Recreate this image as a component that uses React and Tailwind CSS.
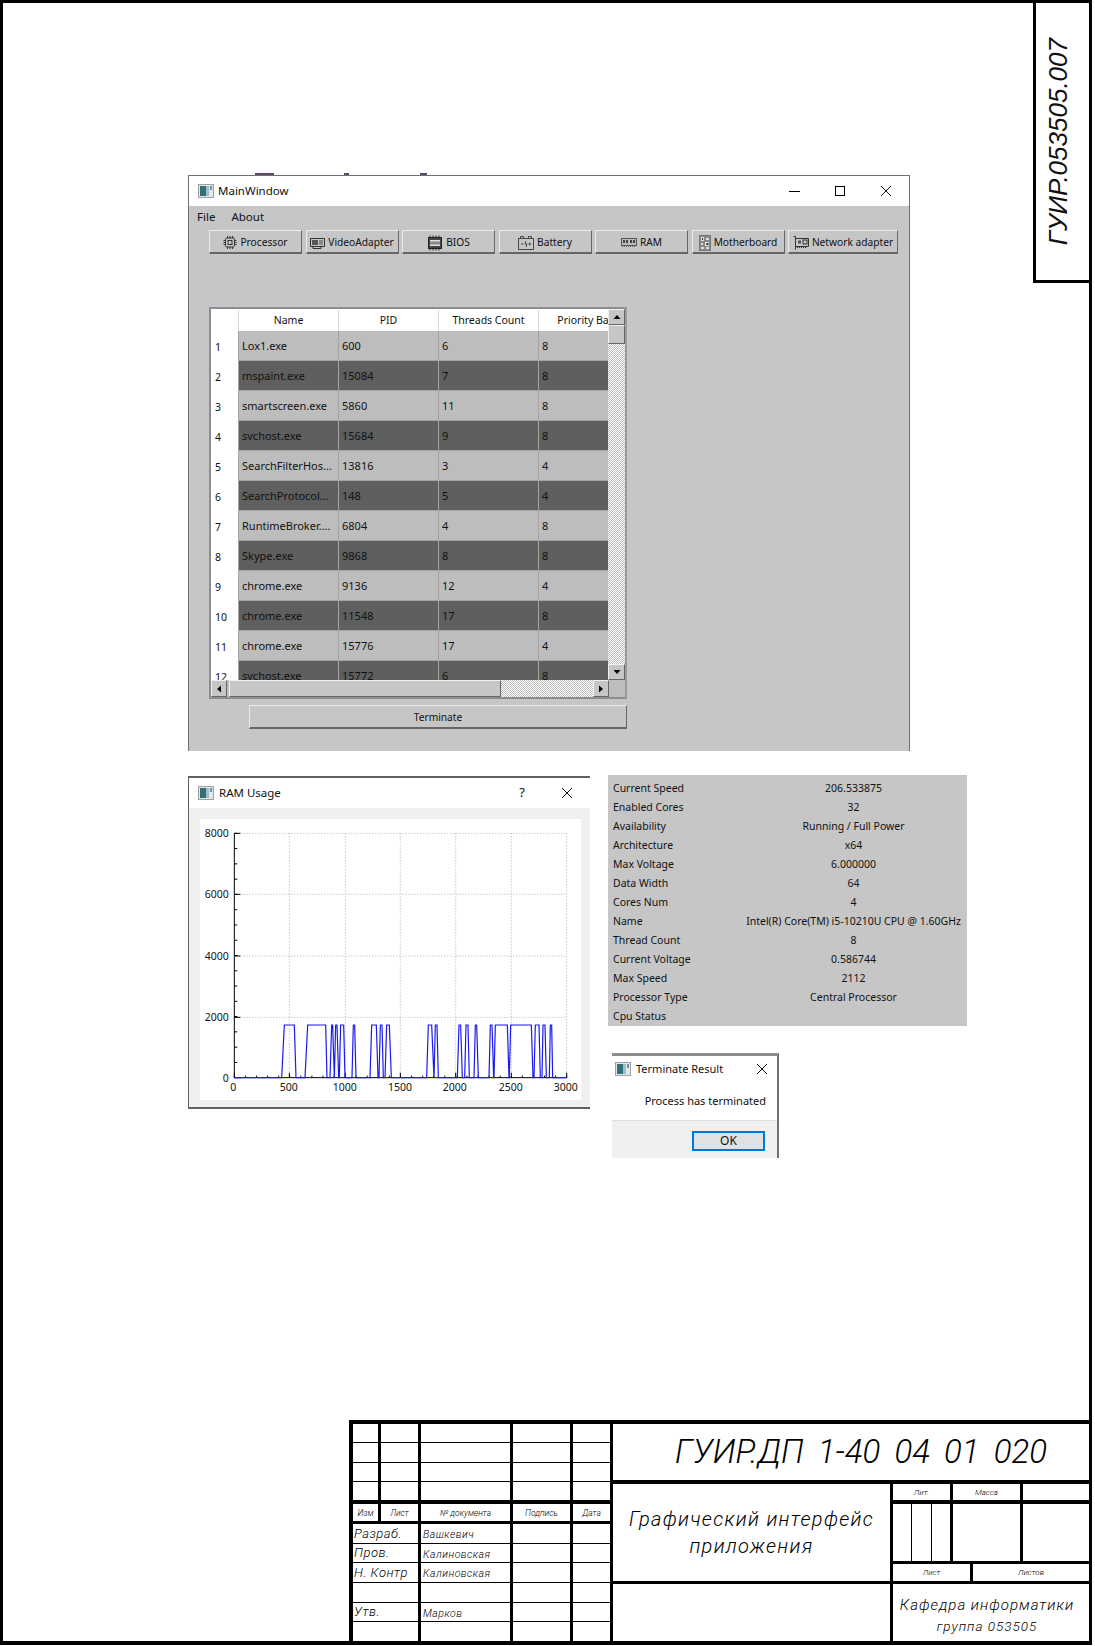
import React from 'react';

const processes = [
  ['Lox1.exe', '600', '6', '8'],
  ['mspaint.exe', '15084', '7', '8'],
  ['smartscreen.exe', '5860', '11', '8'],
  ['svchost.exe', '15684', '9', '8'],
  ['SearchFilterHos...', '13816', '3', '4'],
  ['SearchProtocol...', '148', '5', '4'],
  ['RuntimeBroker....', '6804', '4', '8'],
  ['Skype.exe', '9868', '8', '8'],
  ['chrome.exe', '9136', '12', '4'],
  ['chrome.exe', '11548', '17', '8'],
  ['chrome.exe', '15776', '17', '4'],
  ['svchost.exe', '15772', '6', '8'],
];

const specs = [
  ['Current Speed', '206.533875'],
  ['Enabled Cores', '32'],
  ['Availability', 'Running / Full Power'],
  ['Architecture', 'x64'],
  ['Max Voltage', '6.000000'],
  ['Data Width', '64'],
  ['Cores Num', '4'],
  ['Name', 'Intel(R) Core(TM) i5-10210U CPU @ 1.60GHz'],
  ['Thread Count', '8'],
  ['Current Voltage', '0.586744'],
  ['Max Speed', '2112'],
  ['Processor Type', 'Central Processor'],
  ['Cpu Status', ''],
];

// rise start, top start, top end, fall end - measured on the 3x crop
const bursts = [
  [305, 313, 343, 348], [375, 383, 437, 441], [450, 455, 458, 463], [463, 467, 471, 476],
  [478, 482, 491, 495], [516, 520, 524, 528], [570, 575, 589, 594], [597, 601, 606, 610],
  [615, 620, 628, 634], [740, 745, 755, 762], [762, 766, 771, 775], [832, 837, 842, 847],
  [854, 858, 864, 868], [882, 886, 890, 895], [927, 931, 936, 941], [942, 946, 982, 987],
  [988, 992, 1054, 1059], [1062, 1066, 1077, 1081], [1086, 1089, 1095, 1099], [1108, 1111, 1115, 1118],
];

const px = (z) => z / 3 - 20;
const py = (z) => z / 3 - 48;

function WindowIcon() {
  return (
    <svg width="16" height="14" viewBox="0 0 16 14" className="shrink-0">
      <rect x="0.5" y="0.5" width="15" height="13" fill="#e6e6e6" stroke="#a0a0a0" />
      <rect x="2" y="2" width="6" height="10" fill="#2f6f78" />
      <rect x="8" y="2" width="3" height="10" fill="#9fc0c8" />
      <rect x="12" y="2" width="2" height="4" fill="#6d8fc0" />
    </svg>
  );
}

function CloseIcon() {
  return (
    <svg width="12" height="12" viewBox="0 0 12 12">
      <path d="M1 1l10 10M11 1L1 11" stroke="#111" strokeWidth="1" fill="none" />
    </svg>
  );
}

function CpuIcon() {
  return (
    <svg width="14" height="15" viewBox="0 0 14 15" fill="none" stroke="#333">
      <rect x="2.5" y="3" width="9" height="9" rx="1.5" />
      <rect x="5" y="5.5" width="4" height="4" />
      <path d="M4.5 1v2M7 1v2M9.500 1v2M4.500 12v2M7 12v2M9.500 12v2M0.500 5.500h2M0.500 7.500h2M0.500 9.500h2M11.500 5.500h2M11.500 7.500h2M11.500 9.500h2" />
    </svg>
  );
}

function VideoIcon() {
  return (
    <svg width="15" height="12" viewBox="0 0 15 12" fill="none" stroke="#333">
      <path d="M0.500 1.500h14v8h-14z" />
      <rect x="2" y="3" width="6" height="5" fill="#555" stroke="none" />
      <rect x="9" y="3" width="4" height="5" fill="#888" stroke="none" />
      <path d="M3 10v1.500h8v-1.500" />
    </svg>
  );
}

function BiosIcon() {
  return (
    <svg width="16" height="16" viewBox="0 0 16 16" fill="none" stroke="#222">
      <rect x="1.500" y="2.500" width="13" height="11" fill="#444" />
      <rect x="3" y="5" width="10" height="6" fill="#ddd" stroke="none" />
      <path d="M4 6.500v3M6 6.500v3M8 6.500v3M10 6.500v3M12 6.500v3" stroke="#333" />
      <path d="M3 0.500v2M6 0.500v2M9 0.500v2M12 0.500v2M3 13.500v2M6 13.500v2M9 13.500v2M12 13.500v2" />
    </svg>
  );
}

function BatteryIcon() {
  return (
    <svg width="16" height="15" viewBox="0 0 16 15" fill="none" stroke="#444">
      <path d="M0.500 3.500h15v11h-15z" />
      <path d="M2.500 3.500v-2h3v2M10.500 3.500v-2h3v2M3 9h2.500M10.500 9h2.500M11.700 7.700v2.600" />
      <path d="M8 6l-1 3h2l-1 3" />
    </svg>
  );
}

function RamIcon() {
  return (
    <svg width="16" height="9" viewBox="0 0 16 9" fill="none">
      <rect x="0.500" y="0.500" width="15" height="7" fill="#bbb" stroke="#555" />
      <path d="M2 2h2v3H2zM5 2h2v3H5zM9 2h2v3H9zM12 2h2v3h-2z" fill="#444" />
      <path d="M1 8.500h14" stroke="#666" strokeDasharray="1 1" />
    </svg>
  );
}

function BoardIcon() {
  return (
    <svg width="12" height="16" viewBox="0 0 12 16" fill="none">
      <rect x="0.500" y="0.500" width="11" height="15" fill="#888" stroke="#777" />
      <path d="M2 2h3v4H2zM7 3h3v2H7zM2 8h2v2H2zM6 7h4v4H6zM2 12h3v2H2zM7 12h3v2H7z" fill="#ddd" />
      <path d="M3 3h1v2H3zM7.500 8h2v2h-2z" fill="#333" />
    </svg>
  );
}

function NetworkIcon() {
  return (
    <svg width="16" height="15" viewBox="0 0 16 15" fill="none" stroke="#333">
      <path d="M0.500 1.500h2v13M2.500 3.500h13v8h-13" />
      <rect x="5" y="5.500" width="3" height="3" fill="#555" stroke="none" />
      <rect x="10" y="5" width="4" height="4" />
      <path d="M4 12.500h9" strokeDasharray="1 1" />
    </svg>
  );
}

function QtButton({ icon, label, className }) {
  return (
    <button className={`flex items-center justify-center gap-[3px] h-[24px] pt-[2px] shrink-0 whitespace-nowrap bg-[#c6c6c6] border border-t-[#ececec] border-l-[#ececec] border-r-[#666] border-b-2 border-b-[#666] text-[10.200px] text-[#111] ${className}`}>
      {icon}
      <span>{label}</span>
    </button>
  );
}

function ArrowButton({ d, className }) {
  return (
    <div className={`flex items-center justify-center bg-[#c6c6c6] border border-t-[#f0f0f0] border-l-[#f0f0f0] border-r-[#666] border-b-[#666] ${className}`}>
      <svg width="8" height="8" viewBox="0 0 8 8"><path d={d} fill="#000" /></svg>
    </div>
  );
}

const track = 'bg-[repeating-conic-gradient(#bdbdbd_0_25%,#fff_0_50%)] bg-[length:2px_2px]';

function ProcessTable() {
  return (
    <div className="relative ml-[20px] mt-[53px] w-[418px] h-[392px] flex flex-col bg-white border-2 border-[#8c8c94] border-r-[#9a9aa0]">
      <div className="flex flex-1 min-h-0">
        <div className="w-[399px] overflow-hidden">
          <div className="flex h-[22px] w-[430px] pt-px bg-white text-[10.500px] text-[#111]">
            <div className="w-[27px] shrink-0" />
            {['Name', 'PID', 'Threads Count', 'Priority Base'].map((h) => (
              <div key={h} className="w-[100px] shrink-0 border-l border-[#d8d8d8] flex items-center justify-center whitespace-nowrap">{h}</div>
            ))}
          </div>
          {processes.map((row, i) => (
            <div key={i} className="flex h-[30px] w-[430px] text-[11px] text-[#111]">
              <div className="w-[27px] shrink-0 bg-white pl-[4px] flex items-center pt-[3px] text-[10.500px]">{i + 1}</div>
              <div className={`flex flex-1 border-b border-[#a4a4a4] ${i % 2 ? 'bg-[#5f5f5f]' : 'bg-[#bdbdbd]'}`}>
                {row.map((c, j) => (
                  <div key={j} className="w-[100px] shrink-0 pl-[3px] pt-[2px] flex items-center border-l border-[#a4a4a4] whitespace-nowrap overflow-hidden">{c}</div>
                ))}
              </div>
            </div>
          ))}
        </div>
        <div className="w-[17px] flex flex-col">
          <ArrowButton d="M4 2l3.500 4H0.500z" className="h-[16px]" />
          <div className="h-[19px] bg-[#c6c6c6] border border-t-[#f0f0f0] border-l-[#f0f0f0] border-r-[#666] border-b-[#666]" />
          <div className={`flex-1 ${track}`} />
          <ArrowButton d="M4 6L0.500 2h7z" className="h-[16px]" />
        </div>
      </div>
      <div className="flex h-[17px] shrink-0 bg-[#bdbdbd]">
        <ArrowButton d="M2 4l4-3.500v7z" className="w-[16px]" />
        <div className="w-[272px] ml-[2px] bg-[#c6c6c6] border border-t-[#f0f0f0] border-l-[#f0f0f0] border-r-[#666] border-b-[#666]" />
        <div className={`w-[92px] ${track}`} />
        <ArrowButton d="M6 4L2 0.500v7z" className="w-[16px]" />
      </div>
    </div>
  );
}

function MainWindow() {
  return (
    <div className="absolute left-[188px] top-[175px] w-[722px] h-[576px] bg-[#c6c6c6] border border-b-0 border-[#707070]">
      <div className="flex items-center h-[30px] bg-white pl-[9px] text-[11.500px] text-[#111]">
        <WindowIcon />
        <span className="ml-[4px]">MainWindow</span>
        <div className="ml-auto flex items-center">
          <div className="w-[45px] flex justify-center"><div className="w-[11px] h-px bg-black" /></div>
          <div className="w-[46px] flex justify-center"><div className="w-[10px] h-[10px] border border-black" /></div>
          <div className="w-[46px] flex justify-center"><CloseIcon /></div>
        </div>
      </div>
      <div className="flex gap-[16px] h-[24px] pb-[2px] items-center pl-[8px] text-[11.500px] text-[#111]">
        <span>File</span>
        <span>About</span>
      </div>
      <div className="flex gap-[3.500px] pl-[20px]">
        <QtButton icon={<CpuIcon />} label="Processor" className="w-[93px]" />
        <QtButton icon={<VideoIcon />} label="VideoAdapter" className="w-[93px]" />
        <QtButton icon={<BiosIcon />} label="BIOS" className="w-[93px]" />
        <QtButton icon={<BatteryIcon />} label="Battery" className="w-[93px]" />
        <QtButton icon={<RamIcon />} label="RAM" className="w-[93px]" />
        <QtButton icon={<BoardIcon />} label="Motherboard" className="w-[93px]" />
        <QtButton icon={<NetworkIcon />} label="Network adapter" className="w-[110px]" />
      </div>
      <ProcessTable />
      <QtButton label="Terminate" className="ml-[60px] mt-[6px] w-[378px]" />
    </div>
  );
}

function RamChart() {
  const xs = [163, 328, 496, 661, 827, 994, 1160];
  const ys = [187, 370, 555, 739, 920];
  const xLabels = [[160, '0'], [326, '500'], [494, '1000'], [660, '1500'], [824, '2000'], [992, '2500'], [1157, '3000']];
  const yLabels = [[187, '8000'], [370, '6000'], [555, '4000'], [739, '2000'], [922, '0']];
  const points = [`${px(163)},${py(920)}`];
  bursts.forEach(([a, b, c, d]) => {
    points.push(`${px(a)},${py(920)}`, `${px(b)},${py(762)}`, `${px(c)},${py(762)}`, `${px(d)},${py(920)}`);
  });
  points.push(`${px(1160)},${py(920)}`);
  const minorY = [];
  for (let i = 0; i < 16; i++) minorY.push(187 + (i * (920 - 187)) / 16);
  const minorX = [];
  for (let i = 0; i <= 30; i++) minorX.push(163 + (i * 997) / 30);

  return (
    <svg width="381" height="281" viewBox="0 0 381 281" className="block" fontFamily="'Noto Sans', sans-serif" fontSize="10.500" fill="#111">
      {xs.slice(1).map((x) => (
        <line key={x} x1={px(x)} x2={px(x)} y1={py(187)} y2={py(920)} stroke="#b0b0b0" strokeDasharray="1 2" />
      ))}
      {ys.slice(0, -1).map((y) => (
        <line key={y} x1={px(163)} x2={px(1160)} y1={py(y)} y2={py(y)} stroke="#b0b0b0" strokeDasharray="1 2" />
      ))}
      <path d={`M${px(163)} ${py(187)}V${py(920)}H${px(1160)}`} fill="none" stroke="#000" />
      {minorY.map((y) => <line key={y} x1={px(163)} x2={px(163) + 3} y1={py(y)} y2={py(y)} stroke="#000" />)}
      {ys.map((y) => <line key={y} x1={px(163)} x2={px(163) + 6} y1={py(y)} y2={py(y)} stroke="#000" />)}
      {minorX.map((x) => <line key={x} x1={px(x)} x2={px(x)} y1={py(920)} y2={py(920) - 2} stroke="#000" />)}
      {xs.map((x) => <line key={x} x1={px(x)} x2={px(x)} y1={py(920)} y2={py(920) - 5} stroke="#000" />)}
      <polyline points={points.join(' ')} fill="none" stroke="#1a1af0" strokeWidth="1.200" />
      {yLabels.map(([y, t]) => <text key={t} x={px(146)} y={py(y) + 4} textAnchor="end">{t}</text>)}
      {xLabels.map(([x, t]) => <text key={t} x={px(x)} y={py(950) + 3} textAnchor="middle">{t}</text>)}
    </svg>
  );
}

function RamWindow() {
  return (
    <div className="absolute left-[188px] top-[776px] w-[402px] h-[333px] bg-[#f0f0f0] border-l border-t-2 border-b-2 border-[#606060]">
      <div className="flex items-center h-[30px] bg-white pl-[9px] text-[11.500px] text-[#111]">
        <WindowIcon />
        <span className="ml-[5px]">RAM Usage</span>
        <span className="ml-auto mr-[19px] text-[13px]">?</span>
        <div className="w-[46px] flex justify-center"><CloseIcon /></div>
      </div>
      <div className="ml-[11px] mt-[11px] w-[381px] h-[281px] bg-white">
        <RamChart />
      </div>
    </div>
  );
}

function SpecPanel() {
  return (
    <div className="absolute left-[608px] top-[775px] w-[359px] h-[251px] bg-[#c6c6c6] pt-[4px] text-[10.500px] text-[#111]">
      {specs.map(([k, v]) => (
        <div key={k} className="grid grid-cols-[132px_1fr] h-[19px] items-center">
          <div className="pl-[5px]">{k}</div>
          <div className="text-center whitespace-nowrap">{v}</div>
        </div>
      ))}
    </div>
  );
}

function TerminateDialog() {
  return (
    <div className="absolute left-[612px] top-[1053px] w-[167px] h-[105px] flex flex-col bg-white border-r-2 border-[#707070] border-t-[3px] border-t-[#8c8c8c] text-[#111]">
      <div className="flex items-center h-[26px] pl-[3px] text-[11px]">
        <WindowIcon />
        <span className="ml-[5px]">Terminate Result</span>
        <div className="ml-auto pr-[9px]"><CloseIcon /></div>
      </div>
      <div className="h-[38px] flex items-center justify-end pr-[11px] text-[11px]">Process has terminated</div>
      <div className="flex-1 bg-[#f0f0f0] border-t border-[#dfdfdf] flex justify-end items-start pt-[10px] pr-[12px]">
        <div className="w-[73px] h-[20px] bg-[#e1e1e1] border-2 border-[#0078d7] flex items-center justify-center text-[12px]">OK</div>
      </div>
    </div>
  );
}

const gost = "font-['Roboto'] italic font-light";

function Cell({ children, className = '' }) {
  return <div className={`bg-white flex items-center overflow-hidden whitespace-nowrap ${className}`}>{children}</div>;
}

function Stamp() {
  const people = [
    ['Разраб.', 'Вашкевич'],
    ['Пров.', 'Калиновская'],
    ['Н. Контр', 'Калиновская'],
    ['', ''],
    ['Утв.', 'Марков'],
    ['', ''],
  ];
  return (
    <div className={`self-end flex gap-[3px] w-[740px] h-[221px] shrink-0 bg-black pl-[4px] pt-[4px] text-black ${gost}`}>
      <div className="w-[257px] h-[217px] flex flex-col gap-[3px]">
        <div className="grid grid-cols-[25px_37px_89px_57px_37px] grid-rows-4 gap-x-[3px] gap-y-px h-[76px] mb-px shrink-0">
          {Array.from({ length: 20 }).map((_, i) => <Cell key={i} />)}
        </div>
        <div className="grid grid-cols-[25px_37px_89px_57px_37px] gap-x-[3px] h-[17px] shrink-0 text-[8.500px]">
          {['Изм', 'Лист', '№ документа', 'Подпись', 'Дата'].map((t) => (
            <Cell key={t} className="justify-center pt-[2px]">{t}</Cell>
          ))}
        </div>
        <div className="grid grid-cols-[65px_89px_57px_37px] grid-rows-6 gap-x-[3px] gap-y-px h-[117px] shrink-0">
          {people.map(([role, name], i) => (
            <React.Fragment key={i}>
              <Cell className="pl-[1px] text-[13px] tracking-[0.500px]">{role}</Cell>
              <Cell className="pl-[2px] pt-[3px] text-[10.500px] tracking-[0.500px]">{name}</Cell>
              <Cell />
              <Cell />
            </React.Fragment>
          ))}
        </div>
      </div>
      <div className="w-[476px] h-[217px] flex flex-col gap-[3px]">
        <Cell className="h-[56px] mb-px shrink-0 justify-center pl-[20px] text-[33px] tracking-[0.050px] [word-spacing:6px]">ГУИР.ДП 1-40 04 01 020</Cell>
        <div className="flex gap-[3px] h-[97px] shrink-0">
          <div className="w-[277px] bg-white flex flex-col items-center justify-center whitespace-nowrap text-[20px] tracking-[1.300px] leading-[27px]">
            <span>Графический интерфейс</span>
            <span>приложения</span>
          </div>
          <div className="flex-1 flex flex-col gap-[3px]">
            <div className="grid grid-cols-[57px_67px_66px] gap-x-[3px] mb-px h-[16px] shrink-0 text-[8px]">
              <Cell className="justify-center pt-[2px]">Лит.</Cell>
              <Cell className="justify-center pt-[2px]">Масса</Cell>
              <Cell />
            </div>
            <div className="grid grid-cols-[57px_67px_66px] gap-x-[3px] h-[57px] shrink-0">
              <div className="flex gap-px">
                <Cell className="w-[18px]" />
                <Cell className="w-[19px]" />
                <Cell className="flex-1" />
              </div>
              <Cell />
              <Cell />
            </div>
            <div className="grid grid-cols-[77px_116px] gap-x-[3px] h-[17px] shrink-0 text-[8px]">
              <Cell className="justify-center pt-px">Лист</Cell>
              <Cell className="justify-center pt-px">Листов</Cell>
            </div>
          </div>
        </div>
        <div className="flex gap-[3px] h-[57px] shrink-0">
          <Cell className="w-[277px]" />
          <div className="flex-1 bg-white flex flex-col items-center justify-center whitespace-nowrap pt-[6px] pr-[8px] text-[15px] tracking-[1px] leading-[21px]">
            <span>Кафедра информатики</span>
            <span className="text-[13.500px]">группа 053505</span>
          </div>
        </div>
      </div>
    </div>
  );
}

export default function App() {
  return (
    <div className="relative w-[1095px] h-[1646px] bg-white font-['Noto_Sans',sans-serif]">
      <div className="flex flex-col justify-between w-[1092px] h-[1645px] border-[3px] border-b-4 border-black">
        <div className="self-end w-[56px] h-[280px] border-l-[3px] border-b-[3px] border-black pr-[9px] flex items-center justify-center">
          <span className="[writing-mode:vertical-rl] rotate-180 font-['Liberation_Sans'] italic text-[26px] whitespace-nowrap text-[#111]">ГУИР.053505.007</span>
        </div>
        <Stamp />
      </div>
      <div className="absolute left-[255px] top-[173px] w-[19px] h-[2px] bg-[#5a4a6a]" />
      <div className="absolute left-[344px] top-[173px] w-[5px] h-[2px] bg-[#5a4a6a]" />
      <div className="absolute left-[420px] top-[173px] w-[7px] h-[2px] bg-[#5a4a6a]" />
      <MainWindow />
      <RamWindow />
      <SpecPanel />
      <TerminateDialog />
    </div>
  );
}
